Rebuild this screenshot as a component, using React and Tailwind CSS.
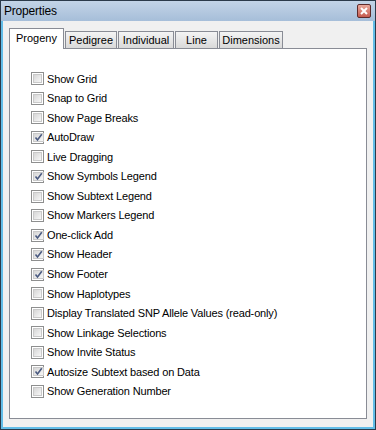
import React from "react";

const items = [
  ["Show Grid", false],
  ["Snap to Grid", false],
  ["Show Page Breaks", false],
  ["AutoDraw", true],
  ["Live Dragging", false],
  ["Show Symbols Legend", true],
  ["Show Subtext Legend", false],
  ["Show Markers Legend", false],
  ["One-click Add", true],
  ["Show Header", true],
  ["Show Footer", true],
  ["Show Haplotypes", false],
  ["Display Translated SNP Allele Values (read-only)", false],
  ["Show Linkage Selections", false],
  ["Show Invite Status", false],
  ["Autosize Subtext based on Data", true],
  ["Show Generation Number", false],
];

const tabs = [
  { label: "Progeny", w: "w-[55px]", active: true },
  { label: "Pedigree", w: "w-[52px]" },
  { label: "Individual", w: "w-[56px]" },
  { label: "Line", w: "w-[43px]" },
  { label: "Dimensions", w: "w-[64px]" },
];

const CheckBox = ({ checked }) => (
  <span className="w-[13px] h-[13px] border border-[#8e8f8f] bg-white p-px flex shrink-0">
    <span className="flex-1 bg-gradient-to-br from-[#d6d6d6] to-[#f7f7f7] border border-[#c9c9c9] flex items-center justify-center">
      {checked && (
        <svg width="9" height="9" viewBox="0 0 9 9">
          <path d="M1.5 4.5 L3.5 7 L7.8 1.2" fill="none" stroke="#4a5a80" strokeWidth="1.6" />
        </svg>
      )}
    </span>
  </span>
);

export default function App() {
  return (
    <div
      className="w-[376px] h-[430px] bg-[#2b3a4a] p-px flex flex-col text-black"
      style={{ fontFamily: '"Liberation Sans", Arial, sans-serif' }}
    >
      {/* title bar */}
      <div className="h-[20px] bg-gradient-to-b from-[#c3d4e7] to-[#a6bed9] flex items-center justify-between pl-[3px] pr-[4px] shrink-0">
        <span className="text-[12px] tracking-[-0.2px]">Properties</span>
        <span className="w-[14px] h-[14px] border border-[#5e2a2a] rounded-[2px] bg-gradient-to-b from-[#e9a89c] to-[#c55a4e] flex items-center justify-center">
          <svg width="8" height="8" viewBox="0 0 8 8">
            <path d="M1 1 L7 7 M7 1 L1 7" stroke="#fff" strokeWidth="2" />
          </svg>
        </span>
      </div>

      {/* body */}
      <div className="flex-1 border-x-2 border-b-2 border-[#62bde8] bg-[#f0f0f0] px-[6px] pt-[7px] text-[11px]">
        <div className="relative z-10 flex items-end h-[21px]">
          {tabs.map((t) =>
            t.active ? (
              <div
                key={t.label}
                className={`${t.w} h-[21px] bg-white border border-b-0 border-[#898c95] flex items-center justify-center pb-[2px]`}
              >
                {t.label}
              </div>
            ) : (
              <div
                key={t.label}
                className={`${t.w} h-[18px] ml-px first:ml-0 bg-gradient-to-b from-[#f4f4f4] to-[#d9d9d9] border border-[#898c95] flex items-center justify-center`}
              >
                {t.label}
              </div>
            )
          )}
        </div>

        <div className="-mt-px h-[371px] bg-white border border-[#898c95] pt-[20px] pl-[21px]">
          {items.map(([label, checked]) => (
            <div key={label} className="h-[19.56px] flex items-center gap-[3px]">
              <CheckBox checked={checked} />
              <span className="tracking-[-0.15px]">{label}</span>
            </div>
          ))}
        </div>
      </div>
    </div>
  );
}
